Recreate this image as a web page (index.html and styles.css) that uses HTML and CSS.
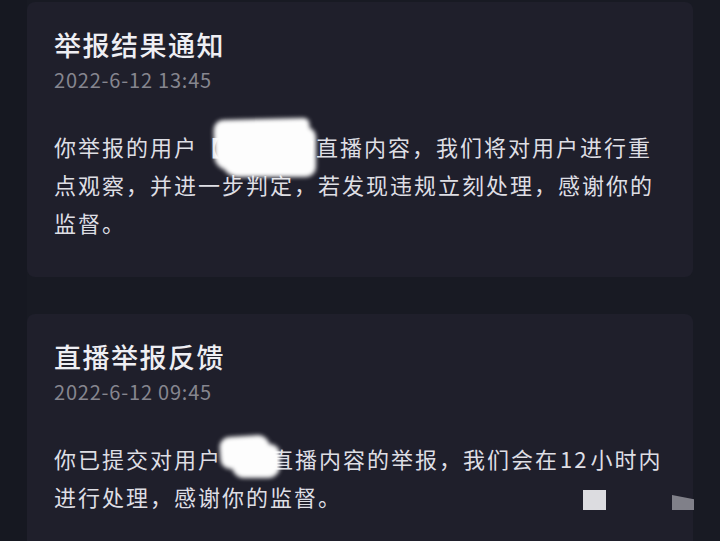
FILE: index.html
```html
<!DOCTYPE html>
<html lang="zh-CN">
<head>
<meta charset="utf-8">
<title>通知</title>
<link rel="stylesheet" href="styles.css">
</head>
<body>
<main class="list">
  <section class="card card-first">
    <h2 class="title">举报结果通知</h2>
    <div class="date">2022-6-12 13:45</div>
    <p class="body">你举报的用户【<span class="redact redact-a"></span>】的直播内容，我们将对用户进行重点观察，并进一步判定，若发现违规立刻处理，感谢你的监督。</p>
    <div class="blob blob-a"><i class="b1"></i><i class="b2"></i></div>
  </section>
  <section class="card">
    <h2 class="title">直播举报反馈</h2>
    <div class="date">2022-6-12 09:45</div>
    <p class="body">你已提交对用户<span class="redact redact-b"></span>直播内容的举报，我们会在<span class="num">12</span>小时内进行处理，感谢你的监督。</p>
    <div class="blob blob-b"><i class="b1"></i><i class="b2"></i></div>
    <div class="chip chip-light"></div>
    <div class="chip chip-grey"></div>
  </section>
</main>
</body>
</html>
```

FILE: styles.css
```css
html, body {
  margin: 0;
  padding: 0;
  background: #181a23;
  height: 100%;
  overflow: hidden;
}
body {
  font-family: "Noto Sans CJK SC", "Noto Sans", sans-serif;
  color: #dedee4;
}
.list {
  width: 666px;
  padding: 2px 0 0 27px;
  display: flex;
  flex-direction: column;
  gap: 37px;
  background: linear-gradient(to right, #161821 0, #161821 27px, #181a23 27px);
}
.card {
  position: relative;
  background: #1f1f2b;
  border-radius: 8px;
  padding: 26px 27px 36px 27px;
}
.title {
  margin: 0;
  font-size: 27px;
  line-height: 34px;
  font-weight: 500;
  letter-spacing: 1.5px;
  color: #eeeef3;
}
.date {
  margin-top: 5px;
  font-size: 20px;
  line-height: 26px;
  letter-spacing: 0.8px;
  color: #86868f;
}
.body {
  margin: 34px 0 0 0;
  font-size: 22px;
  line-height: 38px;
  letter-spacing: 2px;
  color: #dedee4;
}
.num {
  padding: 0 2px 0 1px;
}
.redact {
  display: inline-block;
  vertical-align: top;
}
.redact-a { width: 46px; }
.redact-b { width: 49px; }

.blob {
  position: absolute;
  filter: blur(2px);
}
.blob i {
  position: absolute;
  display: block;
  background: #fdfdfd;
}
.blob-a { left: 187px; top: 115px; width: 102px; height: 60px; }
.blob-a .b1 { left: 0; top: 2px; width: 96px; height: 50px; border-radius: 10px 6px 8px 14px; transform: rotate(-1.5deg); }
.blob-a .b2 { left: 8px; top: 10px; width: 94px; height: 50px; border-radius: 8px 10px 10px 16px; }

.blob-b { left: 193px; top: 118px; width: 60px; height: 48px; }
.blob-b .b1 { left: 0; top: 4px; width: 50px; height: 32px; border-radius: 10px 12px 8px 10px; transform: rotate(-4deg); }
.blob-b .b2 { left: 12px; top: 12px; width: 48px; height: 34px; border-radius: 8px 10px 12px 12px; }

.chip {
  position: absolute;
}
.chip-light {
  left: 556px;
  top: 176px;
  width: 23px;
  height: 20px;
  background: #dcdce0;
}
.chip-grey {
  left: 645px;
  top: 181px;
  width: 22px;
  height: 15px;
  background: #808089;
  clip-path: polygon(0 0, 100% 28%, 100% 100%, 0 100%);
}
```
